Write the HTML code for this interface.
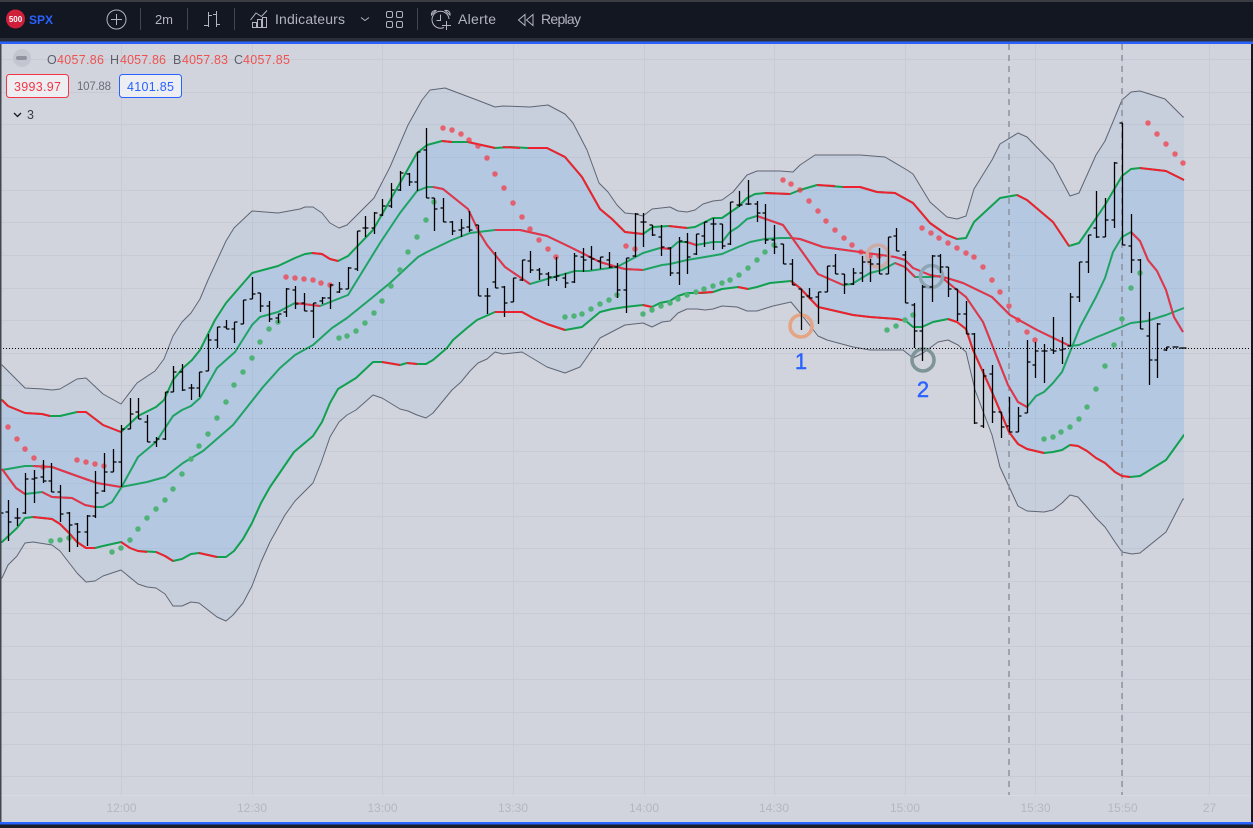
<!DOCTYPE html>
<html lang="fr">
<head>
<meta charset="utf-8">
<title>SPX</title>
<style>
html,body{margin:0;padding:0;background:#131722;width:1253px;height:828px;overflow:hidden}
svg{display:block;position:absolute;left:0;top:0}
text{font-family:"Liberation Sans",sans-serif}
</style>
</head>
<body>
<svg width="1253" height="828" viewBox="0 0 1253 828" xmlns="http://www.w3.org/2000/svg">
<defs><clipPath id="pane"><rect x="1.5" y="44" width="1182.5" height="778"/></clipPath></defs>
<rect width="1253" height="828" fill="#131722"/>
<rect x="1" y="44" width="1250" height="778" fill="#d1d4dd"/>

<!-- grid -->
<path fill="none" stroke="#c8cbd5" d="M121.5 44V795M252.5 44V795M382.5 44V795M513.5 44V795M644.5 44V795M774.5 44V795M905.5 44V795M1035.5 44V795M1122.5 44V795M1209.5 44V795M1 59.5H1251M1 92.5H1251M1 124.5H1251M1 157.5H1251M1 190.5H1251M1 222.5H1251M1 255.5H1251M1 288.5H1251M1 320.5H1251M1 353.5H1251M1 385.5H1251M1 418.5H1251M1 451.5H1251M1 483.5H1251M1 516.5H1251M1 548.5H1251M1 581.5H1251M1 613.5H1251M1 646.5H1251M1 679.5H1251M1 712.5H1251M1 744.5H1251M1 776.5H1251"/>
<path d="M1 795.5H1251" stroke="#d8dae2"/>

<g clip-path="url(#pane)" stroke-linejoin="round">
<!-- outer channel: fill and thin gray outline -->
<path fill-rule="evenodd" fill="#78a8e6" fill-opacity=".1" stroke="#5f6573" stroke-width="1" d="M2 365L25 388L43 389L52 390L60 389L77 379L86 378L103 394L121 404L137 383L155 371L164 359L173 336L182 322L191 313L200 299L208 280L226 241L234 228L252 211L278 213L300 209L305 207L313 207L322 213L330 223L339 228L347 225L374 198L390 167L408 125L422 100L430 90L445 88L477 100L495 107L503 106L530 107L548 105L565 114L573 123L587 150L599 183L608 192L617 205L625 213L635 214L643 216L652 209L670 207L678 211L687 212L695 210L703 204L713 201L722 200L733 192L747 175L757 171L780 171L793 172L800 165L815 155L860 155L885 157L907 170L913 174L930 202L947 217L957 219L966 216L974 189L992 160L1000 144L1018 133L1027 137L1053 164L1070 196L1079 193L1096 155L1105 141L1122 100L1131 92L1140 91L1165 99L1183 117L1190 117L1190 826L0 826L0 365Z M2 578L8 565L17 556L25 543L33 542L52 545L60 551L77 573L86 582L95 581L103 576L121 570L138 584L147 587L156 588L165 594L173 606L182 606L191 602L199 603L217 617L226 621L233 615L243 603L252 586L261 562L270 542L285 515L295 501L303 493L313 483L321 463L330 437L339 422L347 415L356 410L373 395L382 398L400 409L408 411L417 415L426 418L433 413L452 390L461 382L470 371L478 363L487 359L495 352L503 354L522 352L547 367L565 373L580 367L585 360L600 338L625 325L643 323L652 327L662 322L670 321L678 313L687 309L697 309L705 310L713 309L722 306L737 307L747 311L757 311L773 306L791 302L801 314L818 336L827 340L853 347L870 350L903 350L913 358L923 353L938 342L948 340L958 345L966 352L975 390L992 435L1000 467L1018 506L1027 511L1044 512L1053 510L1062 503L1070 495L1078 497L1087 507L1096 518L1105 527L1115 542L1122 552L1132 554L1140 553L1166 532L1183 499L1190 499L1190 826L0 826L0 578Z"/>
<!-- inner channel: fill and green outline -->
<path fill-rule="evenodd" fill="#5aa8ff" fill-opacity=".17" stroke="#11a04f" stroke-width="2" d="M2 400L8 406L25 413L42 414L50 416L60 416L77 412L86 412L103 425L121 432L138 416L156 407L164 400L173 380L183 368L192 360L200 350L215 320L226 303L252 273L278 266L295 258L305 254L312 253L322 254L330 259L338 261L348 256L373 230L392 197L417 153L427 145L442 141L452 142L468 142L495 148L510 147L528 148L547 148L565 157L582 177L600 209L612 219L625 232L643 234L653 227L669 226L687 228L695 227L705 222L713 218L722 218L738 207L747 198L755 194L765 193L790 194L800 190L817 185L843 187L860 187L877 192L895 193L913 203L930 223L947 235L957 239L966 238L974 222L1000 198L1017 195L1027 200L1053 222L1069 246L1079 243L1088 230L1105 205L1122 176L1131 169L1140 168L1166 171L1184 180L1190 180L1190 826L0 826L0 400Z M2 542L17 528L25 518L33 517L52 519L60 524L69 533L77 542L86 548L95 548L103 546L121 542L130 548L138 551L156 552L165 556L173 561L182 559L191 554L199 553L217 557L226 557L234 551L243 539L252 523L261 503L270 487L294 452L313 436L322 422L330 403L338 389L356 378L373 362L382 362L400 365L407 363L417 364L426 364L433 360L447 348L453 340L467 328L477 320L495 312L522 312L533 318L547 324L565 330L582 327L600 312L612 309L625 307L643 305L652 307L660 303L670 301L678 296L687 293L703 293L713 292L722 289L738 287L748 289L757 287L770 283L791 281L800 288L818 307L827 309L853 315L870 317L897 319L906 321L913 327L922 327L933 322L948 319L957 322L966 329L973 350L992 392L1009 432L1018 444L1027 449L1044 453L1053 452L1062 450L1070 445L1078 446L1087 451L1096 458L1105 463L1115 472L1122 476L1130 477L1140 476L1166 460L1184 435L1190 435L1190 826L0 826L0 542Z"/>
</g>

<!-- vertical dashed -->
<path d="M1009 44V795M1122 44V795" stroke="#8a8e9a" stroke-width="1.4" stroke-dasharray="6 5" fill="none"/>

<g fill="none" stroke-linejoin="round">
<!-- inner lines -->
<path stroke="#1fa364" stroke-width="2" d="M2 469L16 488L25 494L42 492L52 497L72 498L85 505L95 507L103 507L112 502L121 488L138 457L156 442L173 416L182 410L191 406L200 398L217 368L235 352L252 325L260 317L278 312L295 303L320 306L348 295L380 243L400 213L417 191L427 187L433 187L443 189L468 209L479 232L487 245L505 267L530 284L547 279L575 271L588 271L617 267L643 253L660 248L670 249L678 242L687 242L696 245L713 242L722 242L730 232L738 227L747 219L757 216L783 225L818 274L843 285L852 284L870 273L882 270L895 263L905 267L915 277L930 277L940 276L957 290L966 297L983 322L1008 385L1018 402L1027 407L1036 396L1044 392L1053 383L1062 372L1070 352L1080 327L1096 297L1105 278L1113 252L1122 237L1131 232L1140 241L1148 260L1157 271L1166 290L1174 317L1183 332"/>
<path stroke="#1fa364" stroke-width="2" d="M2 470L25 466L33 466L52 467L77 476L97 483L121 487L147 482L165 477L183 463L203 451L233 425L263 387L280 368L295 355L313 345L332 328L347 318L373 297L390 283L418 257L427 252L452 240L470 233L495 230L520 230L547 236L570 247L600 262L617 267L625 269L643 270L662 265L670 264L687 260L705 257L722 254L738 247L750 242L765 239L780 238L791 238L800 239L823 247L860 252L895 257L905 260L913 268L930 275L947 278L963 283L992 297L1010 315L1037 330L1070 346L1079 345L1097 337L1107 333L1131 323L1147 321L1166 315L1184 308"/>
<!-- red on inner lines -->
<path stroke="#e8324c" stroke-width="2" d="M2 469L16 488L25 494M42 492L52 497L72 498L85 505L95 507M295 303L320 306M433 187L443 189L468 209L479 232L487 245L505 267L530 284M660 248L670 249M687 242L696 245M757 216L783 225L818 274L843 285M895 263L905 267L915 277M940 276L957 290L966 297L983 322L1008 385L1018 402L1027 407M1131 232L1140 241L1148 260L1157 271L1166 290L1174 317L1183 332M33 466L52 467L77 476L97 483L121 487M495 230L520 230L547 236L570 247L600 262L617 267L625 269L643 270M791 238L800 239L823 247L860 252L895 257L905 260L913 268L930 275L947 278L963 283L992 297L1010 315L1037 330L1070 346"/>
<!-- red on channel -->
<path stroke="#f0202f" stroke-width="2" d="M2 400L8 406L25 413L42 414L50 416M77 412L86 412L103 425L121 432M312 253L322 254L330 259L338 261M442 141L452 142M468 142L495 148M503 147L520 148M528 148L547 148L565 157L582 177L600 209L612 219L625 232L643 234M669 226L687 228M765 193L790 194M817 185L835 186M843 187L860 187L877 192L895 193L913 203L930 223L947 235L957 239M1017 195L1027 200L1053 222L1069 246M1140 168L1166 171L1184 180M33 517L52 519L60 524L69 533L77 542L86 548L95 548M121 542L130 548L138 551L147 552M156 552L165 556L173 561M199 553L217 557M382 362L400 365M407 363L417 364M495 312L522 312L533 318L547 324L565 330M643 305L652 307M696 293L713 292M738 287L748 289M791 281L800 288L818 307L827 309L853 315L870 317L897 319L906 321M948 319L957 322L966 329L973 350L992 392L1009 432L1018 444L1027 449L1044 453M1070 445L1078 446L1087 451L1096 458L1105 463L1115 472L1122 476L1130 477"/>
</g>

<!-- PSAR dots -->
<path fill="none" stroke="#4fb277" stroke-width="5.5" stroke-linecap="round" d="M51 541h0M60 540h0M69 538h0M112 552h0M121 548h0M130 540h0M138 529h0M147 518h0M156 509h0M165 500h0M173 489h0M182 474h0M191 459h0M199 446h0M208 434h0M217 418h0M226 402h0M234 385h0M243 372h0M252 358h0M260 342h0M269 329h0M278 322h0M339 338h0M347 336h0M356 331h0M365 323h0M374 313h0M382 301h0M391 286h0M400 270h0M408 252h0M417 237h0M426 220h0M434 202h0M565 317h0M574 316h0M582 314h0M591 309h0M600 304h0M609 300h0M617 295h0M643 314h0M652 310h0M661 306h0M670 303h0M678 299h0M687 295h0M696 292h0M704 289h0M713 286h0M722 283h0M730 280h0M739 275h0M748 268h0M757 260h0M765 252h0M774 245h0M887 330h0M896 326h0M905 320h0M913 315h0M1044 439h0M1053 437h0M1061 432h0M1070 427h0M1079 419h0M1087 407h0M1096 389h0M1105 366h0M1114 345h0M1122 319h0M1131 288h0M1140 273h0"/>
<path fill="none" stroke="#f5333f" stroke-opacity=".7" stroke-width="5.5" stroke-linecap="round" d="M8 427h0M17 439h0M25 449h0M34 458h0M43 467h0M77 460h0M86 462h0M95 464h0M104 466h0M286 277h0M295 278h0M304 279h0M313 280h0M321 283h0M330 285h0M443 128h0M452 130h0M461 134h0M469 140h0M478 146h0M487 158h0M495 174h0M504 188h0M513 203h0M522 217h0M530 229h0M539 240h0M548 249h0M556 257h0M626 246h0M635 249h0M783 180h0M791 184h0M800 190h0M809 201h0M818 211h0M826 221h0M835 230h0M844 238h0M852 245h0M861 252h0M870 256h0M879 256h0M922 228h0M931 233h0M939 238h0M948 243h0M957 248h0M966 253h0M974 257h0M983 267h0M992 280h0M1000 292h0M1009 306h0M1018 320h0M1027 332h0M1035 340h0M1148 123h0M1157 134h0M1166 144h0M1175 154h0M1183 163h0"/>

<!-- annotation rings -->
<circle cx="801" cy="326" r="11" fill="none" stroke="#e3a585" stroke-width="3.6"/>
<circle cx="923" cy="360" r="11" fill="none" stroke="#7f9496" stroke-width="3.6"/>
<circle cx="878" cy="256" r="11" fill="none" stroke="#cdaca6" stroke-width="3.6"/>
<circle cx="931.5" cy="276.5" r="11" fill="none" stroke="#8ea5b4" stroke-width="3.6"/>

<!-- price bars -->
<path transform="translate(.5 0)" fill="none" stroke="#000" stroke-width="1.3" d="M0 513H3M8 500V541M5 512H8M8 522H11M17 508V526M14 518H20M25 473V514M22 513H25M25 479H28M34 470V503M31 479H34M34 478H37M43 460V483M40 477H43M43 481H46M51 463V492M48 481H51M51 492H54M60 485V522M57 492H60M60 514H63M69 512V552M66 513H69M69 525H72M77 523V547M74 524H77M77 532H80M87 515V546M84 532H87M87 516H90M95 471V518M92 516H95M95 493H98M104 453V492M101 491H104M104 472H107M113 449V472M110 472H113M113 462H116M121 425V487M118 462H121M121 429H124M130 398V429M127 429H130M130 414H133M138 398V419M135 412H138M138 419H141M147 415V442M144 422H147M147 442H150M156 437V447M153 442H156M156 439H159M165 392V440M162 439H165M165 392H168M173 366V392M170 392H173M173 372H176M182 364V391M179 372H182M182 390H185M191 384V400M188 388H194M199 372V397M196 388H199M199 372H202M208 334V371M205 371H208M208 340H211M217 327V348M214 340H217M217 327H220M226 320V329M223 327H226M226 329H229M234 322V343M231 329H234M234 322H237M243 300V324M240 324H243M243 300H246M252 277V299M249 299H252M252 294H255M260 293V312M257 293H260M260 306H263M269 301V322M266 306H269M269 319H272M278 314V323M275 318H278M278 314H281M286 288V317M283 312H286M286 289H289M295 286V309M292 290H295M295 304H298M304 293V311M301 303H304M304 311H307M313 303V338M310 311H313M313 303H316M322 297V304M319 301H322M322 298H325M330 284V309M327 298H330M330 285H333M339 282V293M336 292H339M339 289H342M348 267V289M345 289H348M348 268H351M357 231V271M354 269H357M357 231H360M365 216V237M362 228H368M374 212V234M371 228H374M374 213H377M382 199V216M379 215H382M382 206H385M391 183V208M388 206H391M391 190H394M400 171V191M397 190H400M400 173H403M409 173V186M406 174H409M409 182H412M417 152V191M414 182H417M417 152H420M426 128V198M423 150H426M426 198H429M434 198V231M431 198H434M434 209H437M443 198V222M440 208H443M443 222H446M452 221V235M449 222H452M452 231H455M461 219V237M458 230H461M461 228H464M469 211V232M466 227H469M469 230H472M478 225V296M475 225H478M478 296H481M487 288V314M484 296H490M495 252V288M492 282H495M495 288H498M504 286V317M501 287H504M504 303H507M513 278V302M510 302H513M513 278H516M522 260V281M519 280H522M522 260H525M530 251V273M527 261H530M530 270H533M539 268V280M536 270H539M539 274H542M548 272V286M545 274H548M548 277H551M556 257V281M553 277H556M556 276H559M565 273V288M562 278H565M565 283H568M574 253V283M571 282H574M574 256H577M583 248V272M580 257H583M583 260H586M591 246V270M588 257H591M591 259H594M600 257V269M597 261H600M600 257H603M609 252V268M606 260H609M609 267H612M617 263V298M614 267H617M617 290H620M626 258V313M623 290H626M626 258H629M635 213V257M632 256H635M635 214H638M643 213V247M640 222H646M652 225V236M649 225H652M652 235H655M661 225V256M658 237H661M661 247H664M670 247V276M667 248H670M670 273H673M679 237V285M676 273H679M679 241H682M687 233V274M684 242H687M687 257H690M696 234V255M693 254H696M696 234H699M704 222V247M701 236H704M704 222H707M713 218V250M710 224H716M722 224V249M719 224H722M722 246H725M730 202V245M727 244H730M730 202H733M739 191V207M736 205H742M748 180V205M745 204H751M757 201V222M754 204H757M757 213H760M765 204V244M762 213H765M765 240H768M774 225V254M771 240H774M774 247H777M783 244V264M780 244H783M783 264H786M792 259V285M789 264H792M792 285H795M801 289V330M798 289H801M801 297H804M809 288V298M806 296H809M809 298H812M818 292V324M815 297H818M818 292H821M827 266V292M824 292H827M827 266H830M835 254V274M832 266H835M835 274H838M844 274V294M841 274H844M844 284H847M853 268V285M850 284H853M853 273H856M862 256V282M859 273H862M862 262H865M870 259V282M867 262H870M870 264H873M879 248V274M876 264H879M879 274H882M888 237V274M885 274H888M888 237H891M896 228V251M893 236H896M896 251H899M905 251V303M902 255H905M905 303H908M914 303V348M911 305H914M914 331H917M922 285V361M919 331H922M922 287H925M932 255V302M929 287H932M932 256H935M940 254V273M937 256H940M940 267H943M948 267V297M945 267H948M948 289H951M957 289V321M954 289H957M957 314H960M966 301V334M963 314H966M966 334H969M974 333V424M971 334H974M974 423H977M983 369V428M980 426H983M983 376H986M992 365V423M989 374H992M992 412H995M1001 412V438M998 412H1001M1001 427H1004M1009 397V432M1006 426H1009M1009 432H1012M1018 407V432M1015 432H1018M1018 416H1021M1027 340V413M1024 413H1027M1027 362H1030M1035 342V378M1032 365H1035M1035 351H1038M1044 344V383M1041 351H1047M1053 317V354M1050 350H1053M1053 351H1056M1062 337V364M1059 350H1062M1062 349H1065M1070 293V346M1067 346H1070M1070 297H1073M1079 262V302M1076 297H1079M1079 262H1082M1088 235V273M1085 262H1088M1088 235H1091M1096 191V238M1093 228H1096M1096 237H1099M1105 198V237M1102 237H1105M1105 220H1108M1114 162V228M1111 220H1114M1114 163H1117M1122 123V245M1119 123H1122M1122 245H1125M1131 214V273M1128 246H1131M1131 260H1134M1140 259V329M1137 260H1140M1140 329H1143M1149 312V385M1146 336H1149M1149 360H1152M1157 323V378M1154 360H1157M1157 324H1160M1166 347V351M1163 350H1166M1166 347H1169M1172 347H1178M1179 348H1186"/>

<!-- dotted price line -->
<path d="M0 348.5H1253" stroke="#000" stroke-dasharray="1 2" fill="none"/>

<!-- numbers -->
<text x="801" y="369" font-size="22" fill="#2962ff" stroke="#2962ff" stroke-width=".4" text-anchor="middle">1</text>
<text x="923" y="397" font-size="22" fill="#2962ff" stroke="#2962ff" stroke-width=".4" text-anchor="middle">2</text>

<!-- legend -->
<circle cx="22" cy="58" r="9" fill="#c3c6cf"/>
<rect x="16" y="56" width="11" height="4" rx="2" fill="#8f939e"/>
<g font-size="12.5">
<text x="47" y="64" fill="#5d606b">O</text><text x="57" y="64" fill="#ef5350" textLength="47">4057.86</text>
<text x="110" y="64" fill="#5d606b">H</text><text x="120" y="64" fill="#ef5350" textLength="46">4057.86</text>
<text x="173" y="64" fill="#5d606b">B</text><text x="182" y="64" fill="#ef5350" textLength="46">4057.83</text>
<text x="234" y="64" fill="#5d606b">C</text><text x="243" y="64" fill="#ef5350" textLength="47">4057.85</text>
</g>
<rect x="6.5" y="74.5" width="62" height="23" rx="3" fill="#eceef2" stroke="#f23645"/>
<text x="14" y="91" font-size="12.5" fill="#f23645" textLength="47">3993.97</text>
<text x="77" y="90" font-size="11.5" fill="#6a6d78" textLength="34">107.88</text>
<rect x="119.5" y="74.5" width="62" height="23" rx="3" fill="#eceef2" stroke="#2962ff"/>
<text x="127" y="91" font-size="12.5" fill="#2962ff" textLength="47">4101.85</text>
<path d="M14 113L17.5 116.500L21 113" fill="none" stroke="#131722" stroke-width="1.3"/>
<text x="27" y="119" font-size="12.5" fill="#3a3d47">3</text>

<!-- time axis -->
<g font-size="12" fill="#b4b7c0" text-anchor="middle">
<text x="121.5" y="812">12:00</text>
<text x="252" y="812">12:30</text>
<text x="382.5" y="812">13:00</text>
<text x="513" y="812">13:30</text>
<text x="644" y="812">14:00</text>
<text x="774" y="812">14:30</text>
<text x="905" y="812">15:00</text>
<text x="1035.5" y="812">15:30</text>
<text x="1122.5" y="812">15:50</text>
<text x="1209.5" y="812">27</text>
</g>

<!-- edges -->
<rect x="0" y="44" width="1.5" height="778" fill="#44464d"/>
<rect x="1251" y="44" width="2" height="778" fill="#131722"/>
<rect x="0" y="822" width="1253" height="2.5" fill="#2962ff"/>
<rect x="0" y="824.5" width="1253" height="3.5" fill="#1c1f27"/>

<!-- toolbar -->
<rect width="1253" height="38" fill="#131722"/>
<rect width="1253" height="2" fill="#3a3c42"/>
<rect y="38" width="1253" height="4" fill="#2a2e39"/>
<rect y="41.5" width="1253" height="2.5" fill="#2962ff"/>

<circle cx="15.5" cy="19" r="9.5" fill="#cf1f3b"/>
<text x="15.5" y="22" font-size="8" font-weight="bold" fill="#fff" text-anchor="middle">500</text>
<text x="29" y="24" font-size="12" font-weight="bold" fill="#2962ff" textLength="24">SPX</text>

<g fill="none" stroke="#b2b5be">
<circle cx="116.5" cy="19.5" r="9.5"/>
<path d="M116.5 14V25M111 19.5H122"/>
<path d="M208.5 12V27M204 25.5H208.5M208.5 15.5H212M216.5 11V27M213 14.5H216.5M216.5 24.5H220"/>
<path d="M250.5 20L256 13L261.5 16.5L267 10.5M252.5 22.5H256.5V27.5H252.5ZM257.5 19.5H261.5V27.5H257.5ZM262.5 17.5H266.5V27.5H262.5Z"/>
<path d="M361 17.5L365 20.5L369 17.5"/>
<rect x="386.5" y="11.5" width="6" height="6" rx="1.5"/>
<rect x="396.5" y="11.5" width="6" height="6" rx="1.5"/>
<rect x="386.5" y="21.5" width="6" height="6" rx="1.5"/>
<rect x="396.5" y="21.5" width="6" height="6" rx="1.5"/>
<path d="M444 27.5A8.5 8.5 0 1 1 449 19M440.5 14.5V20.5H436.5M431.5 15A4 4 0 0 1 436 10.5ZM450 15A4 4 0 0 0 445 10.5Z"/>
<path d="M446.5 21V30M442 25.5H451"/>
<path d="M525 14.5V25.5L518.5 20ZM533 14.5V25.5L526.500 20Z"/>
</g>
<path d="M140.5 8V30M187.5 8V30M234.5 8V30M417.5 8V30" stroke="#434651"/>
<g font-size="14" fill="#b2b5be">
<text x="155" y="24" font-size="13" textLength="18">2m</text>
<text x="275" y="24" textLength="70">Indicateurs</text>
<text x="458" y="24" textLength="38">Alerte</text>
<text x="541" y="24" textLength="40">Replay</text>
</g>
</svg>
</body>
</html>
